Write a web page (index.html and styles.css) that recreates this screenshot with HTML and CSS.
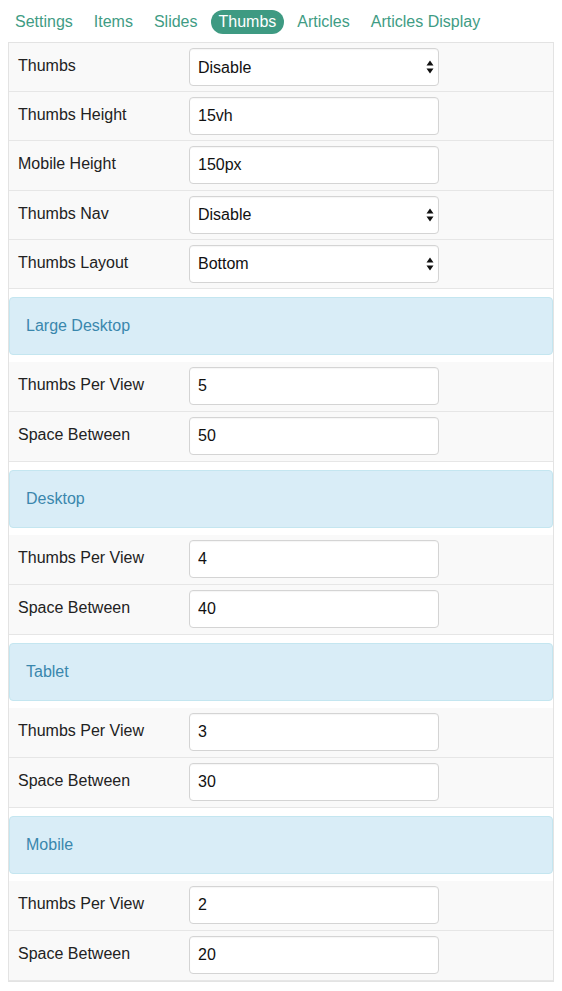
FILE: index.html
```html
<!DOCTYPE html>
<html>
<head>
<meta charset="utf-8">
<link rel="stylesheet" href="styles.css">
</head>
<body>
<nav class="tabs">
  <a class="tab">Settings</a>
  <a class="tab">Items</a>
  <a class="tab">Slides</a>
  <a class="tab active">Thumbs</a>
  <a class="tab">Articles</a>
  <a class="tab">Articles Display</a>
</nav>
<div class="panel">
  <div class="row"><label class="lbl">Thumbs</label><div class="sel"><select class="ctl"><option>Disable</option></select><svg class="arr" width="8" height="14" viewBox="0 0 8 14"><path d="M4 0.5 L7.5 5.5 L0.5 5.5 Z M0.5 8.5 L7.5 8.5 L4 13.5 Z" fill="#111"/></svg></div></div>
  <div class="row"><label class="lbl">Thumbs Height</label><input class="ctl" value="15vh"></div>
  <div class="row"><label class="lbl">Mobile Height</label><input class="ctl" value="150px"></div>
  <div class="row"><label class="lbl">Thumbs Nav</label><div class="sel"><select class="ctl"><option>Disable</option></select><svg class="arr" width="8" height="14" viewBox="0 0 8 14"><path d="M4 0.5 L7.5 5.5 L0.5 5.5 Z M0.5 8.5 L7.5 8.5 L4 13.5 Z" fill="#111"/></svg></div></div>
  <div class="row"><label class="lbl">Thumbs Layout</label><div class="sel"><select class="ctl"><option>Bottom</option></select><svg class="arr" width="8" height="14" viewBox="0 0 8 14"><path d="M4 0.5 L7.5 5.5 L0.5 5.5 Z M0.5 8.5 L7.5 8.5 L4 13.5 Z" fill="#111"/></svg></div></div>

  <div class="section">Large Desktop</div>
  <div class="row"><label class="lbl">Thumbs Per View</label><input class="ctl" value="5"></div>
  <div class="row"><label class="lbl">Space Between</label><input class="ctl" value="50"></div>

  <div class="section">Desktop</div>
  <div class="row"><label class="lbl">Thumbs Per View</label><input class="ctl" value="4"></div>
  <div class="row"><label class="lbl">Space Between</label><input class="ctl" value="40"></div>

  <div class="section">Tablet</div>
  <div class="row"><label class="lbl">Thumbs Per View</label><input class="ctl" value="3"></div>
  <div class="row"><label class="lbl">Space Between</label><input class="ctl" value="30"></div>

  <div class="section">Mobile</div>
  <div class="row"><label class="lbl">Thumbs Per View</label><input class="ctl" value="2"></div>
  <div class="row"><label class="lbl">Space Between</label><input class="ctl" value="20"></div>
</div>
</body>
</html>
```

FILE: styles.css
```css
html, body {
  margin: 0;
  background: #ffffff;
}
body {
  padding: 10px 8px 8px 8px;
  font-family: "Liberation Sans", Arial, sans-serif;
  font-size: 16px;
  color: #222222;
}
.tabs {
  display: flex;
  height: 24px;
  margin-bottom: 8px;
}
.tab {
  display: block;
  padding: 0 7px;
  margin-right: 7px;
  line-height: 24px;
  color: #3f9c84;
  border-radius: 12px;
}
.tab.active {
  background: #3e9a82;
  color: #ffffff;
  padding: 0 8px;
  margin-left: -1px;
  margin-right: 6px;
}
.panel {
  border: 1px solid #e3e3e3;
  background: #ffffff;
}
.row {
  display: grid;
  grid-template-columns: 171px 250px;
  align-items: center;
  padding: 5px 0 5.2px 9px;
  background: #f9f9f9;
  border-bottom: 1px solid #e6e6e6;
}
.section ~ .row {
  padding: 5.5px 0 5.5px 9px;
}
.row > .lbl {
  margin-top: -2px;
  color: #222222;
}
.row > .ctl, .sel {
  grid-column: 2;
}
.ctl {
  box-sizing: border-box;
  width: 250px;
  height: 38px;
  margin: 0;
  padding: 0 9px 0 8px;
  border: 1px solid #d4d4d4;
  border-radius: 4px;
  background: #ffffff;
  font-family: "Liberation Sans", Arial, sans-serif;
  font-size: 16px;
  color: #111111;
  outline: none;
  box-shadow: inset 0 1px 1px rgba(0,0,0,0.04);
}
select.ctl {
  appearance: none;
  -webkit-appearance: none;
}
.sel {
  position: relative;
  width: 250px;
  height: 38px;
}
.arr {
  position: absolute;
  right: 5px;
  top: 12px;
  pointer-events: none;
}
.section {
  margin: 8px 0 7px 0;
  padding: 18px 16px 18px 16px;
  line-height: 20px;
  background: #d9edf7;
  border: 1px solid #c4e6f0;
  border-radius: 4px;
  color: #3a87ad;
}
```
